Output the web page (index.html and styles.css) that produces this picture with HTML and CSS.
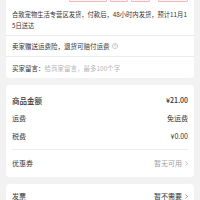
FILE: index.html
```html
<!DOCTYPE html>
<html lang="zh-CN">
<head>
<meta charset="utf-8">
<link rel="stylesheet" href="styles.css">
</head>
<body>
<div class="card card-top">
  <div class="tags">
    <span class="tag tag-a"></span>
    <span class="tag tag-b"></span>
    <span class="tag tag-c"></span>
    <span class="tag tag-d"></span>
  </div>
  <div class="ship">合致宠物生活专营区发货，付款后，48小时内发货，预计11月15日送达</div>
  <div class="row-line insure">
    <span>卖家赠送运费险，退货可赔付运费</span>
    <svg class="qicon" viewBox="0 0 12 12" width="6" height="6"><circle cx="6" cy="6" r="5.3" fill="none" stroke="#999" stroke-width="0.9"/><path d="M4.4 4.7a1.6 1.6 0 1 1 2.3 1.4c-.5.3-.7.6-.7 1.2" fill="none" stroke="#999" stroke-width="0.9" stroke-linecap="round"/><circle cx="6" cy="8.9" r="0.6" fill="#999"/></svg>
  </div>
  <div class="row-line note">
    <span class="note-label">买家留言：</span><span class="note-ph">给商家留言，最多100个字</span>
  </div>
</div>

<div class="card card-sum">
  <div class="sum-list">
    <div class="sum-row"><span class="sum-title">商品金额</span><span class="sum-val strong">¥21.00</span></div>
    <div class="sum-row"><span>运费</span><span class="sum-val">免运费</span></div>
    <div class="sum-row"><span>税费</span><span class="sum-val">¥0.00</span></div>
  </div>
  <div class="link-row">
    <span>优惠券</span>
    <span class="link-val muted">暂无可用<svg class="chev" viewBox="0 0 6 10" width="3" height="5"><polyline points="1,1 5,5 1,9" fill="none" stroke="#999" stroke-width="1.2"/></svg></span>
  </div>
</div>

<div class="card card-inv">
  <div class="link-row inv-row">
    <span>发票</span>
    <span class="link-val">暂不需要<svg class="chev" viewBox="0 0 6 10" width="3" height="5"><polyline points="1,1 5,5 1,9" fill="none" stroke="#666" stroke-width="1.2"/></svg></span>
  </div>
</div>
</body>
</html>
```

FILE: styles.css
```css
html, body {
  margin: 0;
  padding: 0;
}
body {
  background: #f2f2f2;
  font-family: "Noto Sans CJK SC", "Noto Sans", sans-serif;
  color: #333;
  width: 200px;
  height: 200px;
  overflow: hidden;
}
.card {
  background: #fff;
  margin: 0 6px;
  border-radius: 4px;
}
.card-top {
  margin-top: -8px;
  border-radius: 0 0 4px 4px;
  display: flow-root;
}
.tags {
  display: flex;
  justify-content: flex-end;
  gap: 3px;
  padding: 0 6px 0 0;
  height: 11px;
}
.tag {
  display: block;
  height: 10px;
  border: 0.5px solid #f2b8b8;
  background: #fff6f6;
  border-radius: 1px;
  box-sizing: border-box;
}
.tag-a { width: 38px; }
.tag-b { width: 18px; }
.tag-c { width: 19px; }
.tag-d { width: 30px; margin-left: 5px; }
.ship {
  font-size: 6.3px;
  line-height: 10.5px;
  padding: 7px 5px 4px 6px;
  border-bottom: 0.5px solid #ececec;
  word-break: break-all;
}
.row-line {
  display: flex;
  align-items: center;
  font-size: 6.5px;
  padding: 0 6px;
}
.insure {
  height: 20px;
  border-bottom: 0.5px solid #ececec;
  gap: 2px;
}
.qicon {
  display: block;
}
.note {
  height: 21px;
}
.note-ph {
  color: #b5b5b5;
}
.card-sum {
  margin-top: 7px;
  padding: 6px 6px 0 6px;
}
.sum-list {
  border-bottom: 0.5px solid #ececec;
  padding-bottom: 3.5px;
}
.sum-row {
  display: flex;
  justify-content: space-between;
  align-items: center;
  height: 18px;
  font-size: 7px;
}
.sum-title {
  font-size: 7.5px;
  font-weight: 500;
}
.strong {
  font-weight: 500;
}
.link-row {
  display: flex;
  justify-content: space-between;
  align-items: center;
  height: 27px;
  font-size: 7px;
}
.inv-row {
  height: 25px;
}
.link-val {
  display: flex;
  align-items: center;
  gap: 3px;
}
.muted {
  color: #a0a0a0;
}
.card-inv {
  margin-top: 7px;
  padding: 0 6px;
}
.chev {
  display: block;
}
```
